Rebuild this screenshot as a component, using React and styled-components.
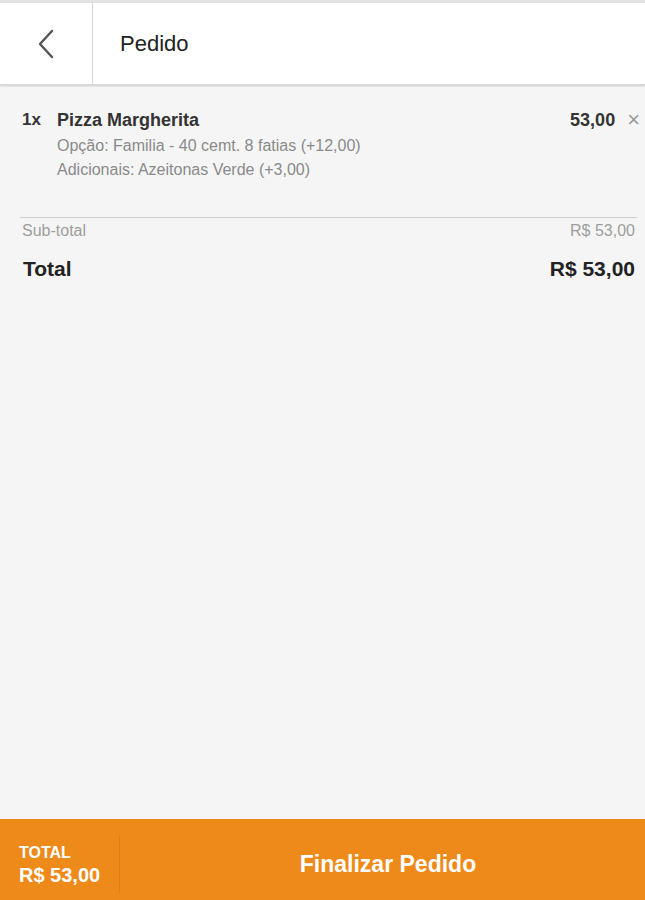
import styled, { createGlobalStyle } from 'styled-components'

const GlobalStyle = createGlobalStyle`
  html, body {
    margin: 0;
    padding: 0;
    background: #f5f5f5;
    font-family: "Liberation Sans", Arial, sans-serif;
  }
`

const order = {
  qty: 1,
  name: 'Pizza Margherita',
  price: '53,00',
  details: ['Opção: Familia - 40 cemt. 8 fatias (+12,00)', 'Adicionais: Azeitonas Verde (+3,00)'],
  subtotal: 'R$ 53,00',
  total: 'R$ 53,00',
}

const App = () => (
  <Page>
    <GlobalStyle />
    <Header>
      <BackButton aria-label="Voltar">
        <svg width="22" height="32" viewBox="0 0 22 32" fill="none">
          <path d="M17 3 L5 16 L17 29" stroke="#555" strokeWidth="2.4" strokeLinecap="round" strokeLinejoin="round" />
        </svg>
      </BackButton>
      <Title>Pedido</Title>
    </Header>

    <Content>
      <ItemRow>
        <Qty>{order.qty}x</Qty>
        <ItemInfo>
          <ItemName>{order.name}</ItemName>
          {order.details.map((d) => (
            <Detail key={d}>{d}</Detail>
          ))}
        </ItemInfo>
        <ItemPrice>{order.price}</ItemPrice>
        <Remove aria-label="Remover">×</Remove>
      </ItemRow>

      <Totals>
        <SumRow>
          <span>Sub-total</span>
          <span>{order.subtotal}</span>
        </SumRow>
        <SumRow $big>
          <span>Total</span>
          <span>{order.total}</span>
        </SumRow>
      </Totals>
    </Content>

    <Footer>
      <FooterTotal>
        <small>TOTAL</small>
        <strong>{order.total}</strong>
      </FooterTotal>
      <FinishButton>Finalizar Pedido</FinishButton>
    </Footer>
  </Page>
)

export default App

const Page = styled.div`
  height: 900px;
  display: flex;
  flex-direction: column;
  background: #f5f5f5;
  border-top: 3px solid #e3e3e3;
  box-sizing: border-box;
`

const Header = styled.header`
  height: 81px;
  display: flex;
  align-items: stretch;
  background: #fff;
  box-shadow: 0 1px 2px rgba(0, 0, 0, 0.18);
  border-bottom: 1px solid #d9d9d9;
  flex-shrink: 0;
`

const BackButton = styled.button`
  width: 93px;
  border: none;
  border-right: 1px solid #d6d6d6;
  background: transparent;
  display: flex;
  align-items: center;
  justify-content: center;
  padding: 0;
  cursor: pointer;
`

const Title = styled.h1`
  margin: 0;
  padding-left: 27px;
  display: flex;
  align-items: center;
  font-size: 22px;
  font-weight: normal;
  color: #222;
`

const Content = styled.main`
  flex: 1;
  padding: 24px 8px 0 20px;
`

const ItemRow = styled.div`
  display: flex;
  align-items: flex-start;
  padding: 0 0 35px 2px;
  border-bottom: 1px solid #cfcfcf;
`

const Qty = styled.span`
  width: 35px;
  font-size: 17px;
  font-weight: bold;
  color: #333;
  line-height: 22px;
`

const ItemInfo = styled.div`
  flex: 1;
  display: flex;
  flex-direction: column;
`

const ItemName = styled.span`
  font-size: 18px;
  font-weight: bold;
  color: #333;
  line-height: 22px;
  margin-bottom: 3px;
`

const Detail = styled.span`
  font-size: 16px;
  color: #8a8a8a;
  line-height: 24px;
`

const ItemPrice = styled.span`
  font-size: 18px;
  font-weight: bold;
  color: #333;
  line-height: 22px;
`

const Remove = styled.button`
  border: none;
  background: transparent;
  color: #9a9a9a;
  font-size: 22px;
  line-height: 22px;
  padding: 0;
  margin-left: 12px;
  margin-right: -3px;
  font-family: "Liberation Sans", Arial, sans-serif;
  cursor: pointer;
`

const Totals = styled.div`
  display: flex;
  flex-direction: column;
  gap: 17px;
  padding: 4px 2px 0 2px;
`

const SumRow = styled.div`
  display: flex;
  justify-content: space-between;
  font-size: ${(p) => (p.$big ? '21px' : '16px')};
  font-weight: ${(p) => (p.$big ? 'bold' : 'normal')};
  color: ${(p) => (p.$big ? '#222' : '#9e9e9e')};
  line-height: ${(p) => (p.$big ? '24px' : '18px')};
  padding-left: ${(p) => (p.$big ? '1px' : '0')};
`

const Footer = styled.footer`
  height: 81px;
  background: #ee8a1a;
  display: flex;
  align-items: stretch;
  flex-shrink: 0;
`

const FooterTotal = styled.div`
  width: 100px;
  margin: 17px 0 7px;
  padding-left: 19px;
  border-right: 1px solid #dc7e16;
  display: flex;
  flex-direction: column;
  justify-content: center;
  gap: 2px;
  color: #fff;

  small {
    font-size: 16px;
    font-weight: bold;
    line-height: 18px;
  }

  strong {
    font-size: 20px;
    line-height: 22px;
  }
`

const FinishButton = styled.button`
  flex: 1;
  border: none;
  background: transparent;
  color: #fff;
  font-family: "Liberation Sans", Arial, sans-serif;
  font-size: 23px;
  font-weight: bold;
  padding: 9px 0 0 11px;
  cursor: pointer;
`
